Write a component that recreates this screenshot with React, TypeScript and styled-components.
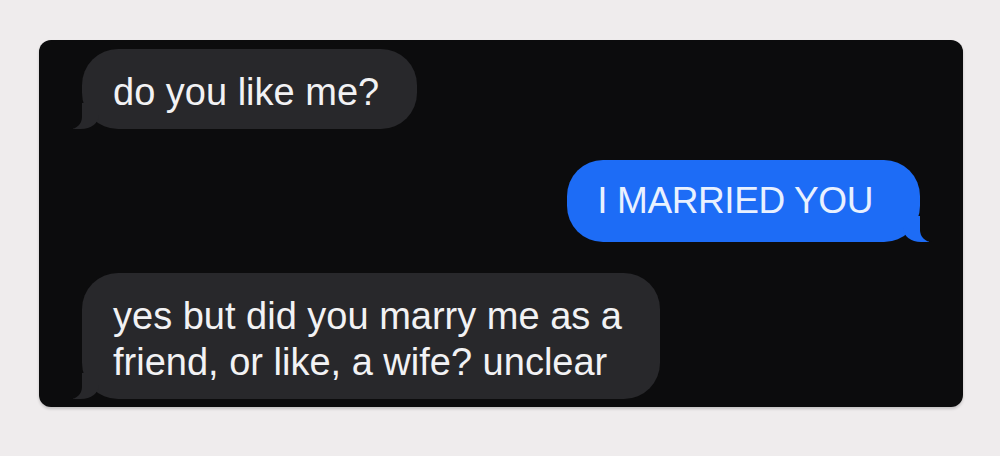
import React from "react";
import styled, { createGlobalStyle, css } from "styled-components";

const Global = createGlobalStyle`
  html, body { margin: 0; padding: 0; background: #efeced; }
  body { font-family: "Liberation Sans", Arial, sans-serif; }
`;

const Page = styled.div`
  width: 1000px;
  height: 456px;
  box-sizing: border-box;
  padding: 40px 37px 0 39px;
  background: #efeced;
`;

const Card = styled.div`
  height: 367px;
  box-sizing: border-box;
  background: #0c0c0d;
  border-radius: 12px;
  padding: 9px 43px 7px 43px;
  display: flex;
  flex-direction: column;
  gap: 31px;
  box-shadow: 0 2px 3px rgba(0, 0, 0, 0.18);
`;

const Bubble = styled.div<{ $me?: boolean }>`
  position: relative;
  box-sizing: border-box;
  font-size: 38px;
  line-height: 46px;
  border-radius: 36px;
  padding: 20px 38px 14px 31px;
  align-self: flex-start;
  background: #28282b;
  color: #f2f2f4;

  &::before,
  &::after {
    content: "";
    position: absolute;
    bottom: 0;
    height: 26px;
  }
  &::before {
    left: -9px;
    width: 26px;
    background: #28282b;
    border-bottom-right-radius: 18px 14px;
  }
  &::after {
    left: -28px;
    width: 28px;
    background: #0c0c0d;
    border-bottom-right-radius: 12px;
  }

  ${(p) =>
    p.$me &&
    css`
      align-self: flex-end;
      background: #1d6cf6;
      color: #e9f1ff;
      font-size: 37px;
      padding: 18px 47px 18px 30px;
      letter-spacing: -0.4px;
      &::before {
        left: auto;
        right: -9px;
        background: #1d6cf6;
        border-bottom-right-radius: 0;
        border-bottom-left-radius: 18px 14px;
      }
      &::after {
        left: auto;
        right: -28px;
        border-bottom-right-radius: 0;
        border-bottom-left-radius: 12px;
      }
    `}
`;

const Text = styled.span`
  position: relative;
  z-index: 1;
`;

export default function App() {
  return (
    <>
      <Global />
      <Page>
        <Card>
          <Bubble>
            <Text>do you like me?</Text>
          </Bubble>
          <Bubble $me>
            <Text>I MARRIED YOU</Text>
          </Bubble>
          <Bubble>
            <Text>
              yes but did you marry me as a
              <br />
              friend, or like, a wife? unclear
            </Text>
          </Bubble>
        </Card>
      </Page>
    </>
  );
}
